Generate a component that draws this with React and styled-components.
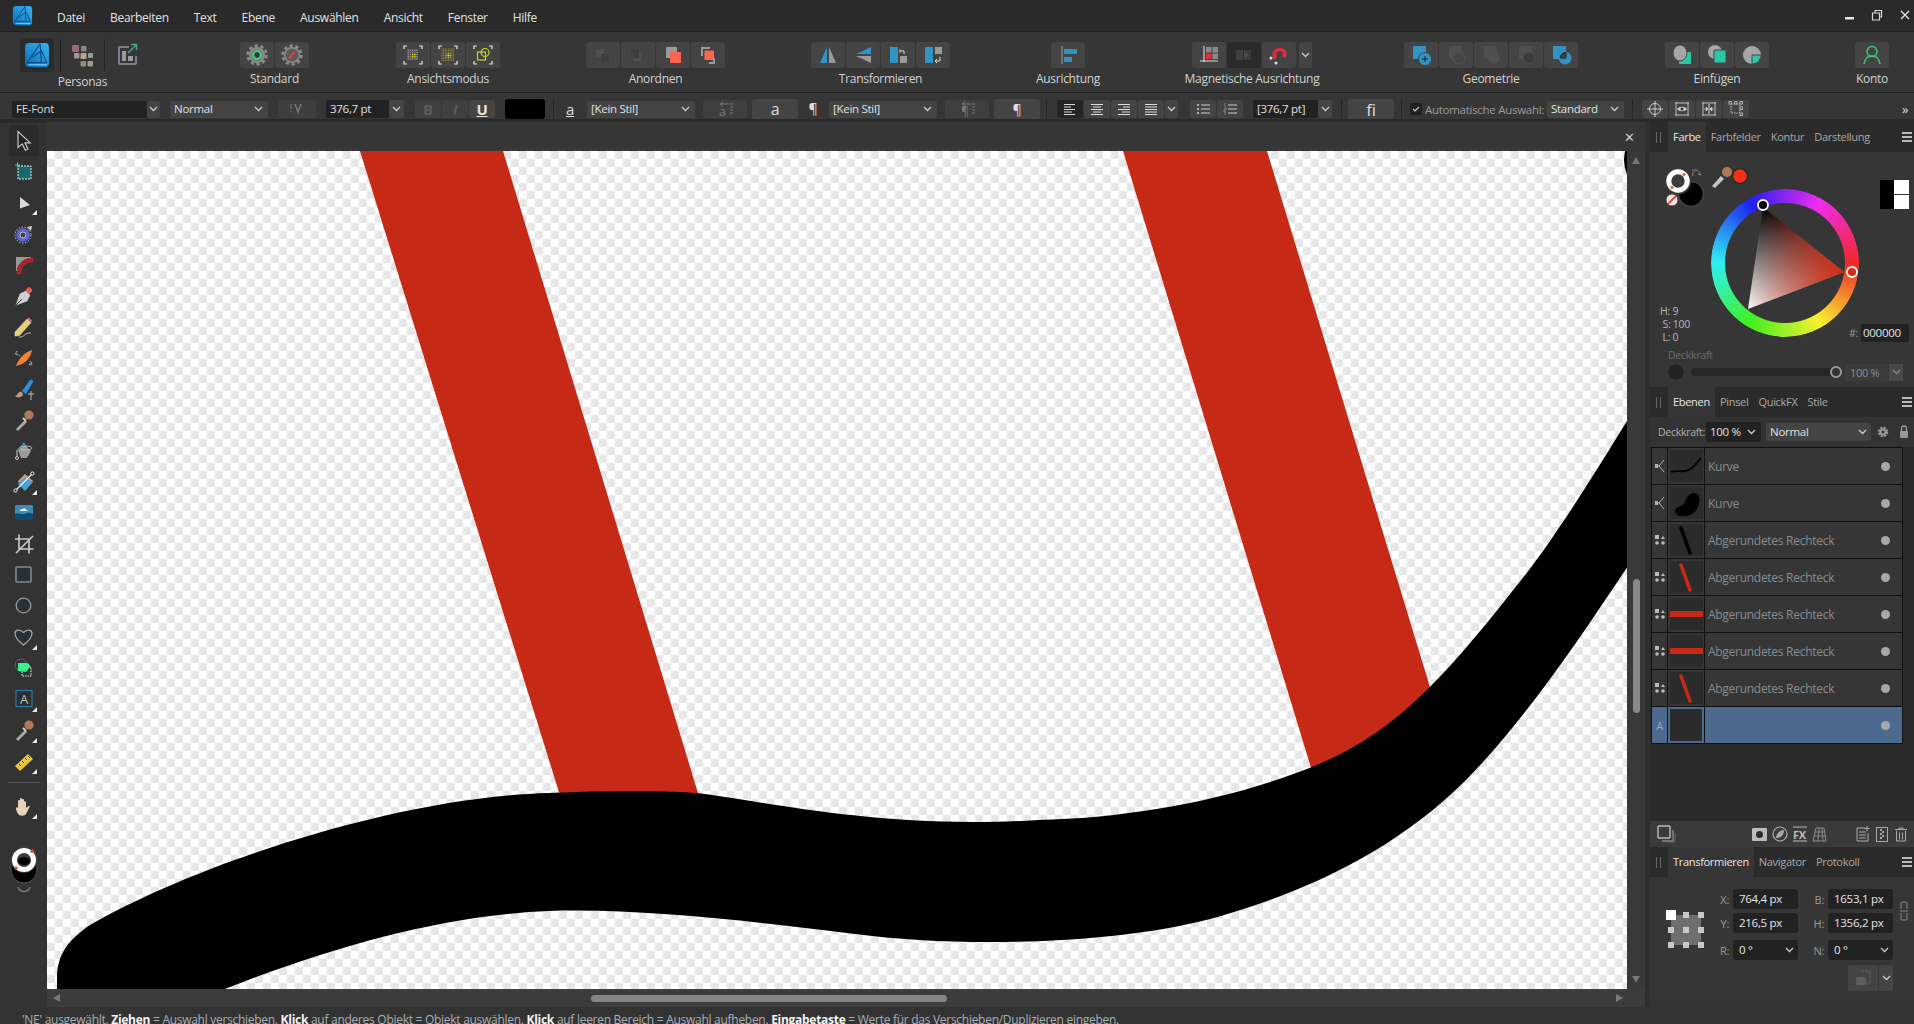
import React from "react";
import styled, { createGlobalStyle } from "styled-components";

const Global = createGlobalStyle`
  html, body { margin: 0; padding: 0; background: #333; overflow: hidden; }
  * { box-sizing: border-box; }
  #root { height: 1024px; }
`;

const App_ = styled.div`
  width: 1914px; height: 1024px; display: flex; flex-direction: column; overflow: hidden;
  background: #363636; color: #d4d4d4; letter-spacing: -0.28px;
  font-family: "Open Sans", "Noto Sans", "Liberation Sans", sans-serif; font-size: 12px;
`;
const MenuBar = styled.div`
  height: 32px; flex: none; display: flex; align-items: center; background: #2a2a2a;
  border-bottom: 1px solid #1f1f1f; padding: 0 0 1px 12px;
`;
const MenuList = styled.div`display: flex; gap: 25px; margin-left: 24px; flex: 1; padding-top: 6px;`;
const MenuItem = styled.span`color: #e2e2e2; font-size: 12px; line-height: 16px;`;
const WinControls = styled.div`display: flex; align-items: center; gap: 16px; margin-right: 3px;`;

const Toolbar = styled.div`
  height: 61px; flex: none; display: flex; background: #363636; border-bottom: 1px solid #222;
  padding: 0 0 0 20px;
`;
const Group = styled.div`
  width: ${p => p.$w}px; margin-left: ${p => p.$ml || 0}px; flex: none; display: flex;
  flex-direction: column; align-items: center; padding-top: 10px;
`;
const BtnRow = styled.div`display: flex; gap: 1px; height: 26px;`;
const TBtn = styled.div`
  width: 34px; height: 26px; border-radius: 3px; display: flex; align-items: center; justify-content: center;
  background: ${p => (p.$off ? "#2b2b2b" : "#444")};
`;
const TChevron = styled.div`
  width: 13px; height: 26px; margin-left: 2px; border-radius: 2px; background: #444;
  display: flex; align-items: center; justify-content: center;
`;
const GroupLabel = styled.div`
  margin-top: 3px; color: #d2d2d2; font-size: 12px; line-height: 16px; white-space: nowrap;
`;
const PersonaWrap = styled.div`
  width: 125px; flex: none; display: flex; flex-direction: column; align-items: center; padding-top: 6px;
`;
const PersonaRow = styled.div`display: flex; height: 34px; width: 100%; align-items: center;`;
const PersonaActive = styled.div`
  width: 34px; height: 34px; border-radius: 3px; background: #2b2b2b; display: flex; align-items: center; justify-content: center;
`;
const PersonaSep = styled.div`width: 1px; height: 32px; background: #222; margin-left: ${p => p.$ml}px;`;
const PersonaIcon = styled.div`margin-left: ${p => p.$ml}px; display: flex;`;
const PersonaLabel = styled(GroupLabel)`margin-top: 2px;`;

const ContextBar = styled.div`
  height: 29px; flex: none; display: flex; align-items: center; background: #363636;
  border-bottom: 3px solid #2a2a2a; padding: 6px 0 0 12px;
`;
const Field = styled.div`
  width: ${p => p.$w}px; margin-left: ${p => p.$ml || 0}px; height: ${p => p.$h || 17}px; flex: none;
  display: flex; align-items: center; justify-content: space-between; padding: 0 ${p => p.$pr ?? 5}px 0 4px;
  background: ${p => p.$bg || "#444"}; border-radius: 2px; color: ${p => p.$c || "#e0e0e0"};
  font-size: 11.5px; white-space: nowrap; line-height: 14px;
`;
const CBtn = styled.div`
  width: ${p => p.$w || 26}px; height: ${p => p.$h || 18}px; margin-left: ${p => p.$ml ?? 1}px; flex: none;
  display: flex; align-items: center; justify-content: center; border-radius: 3px;
  background: ${p => p.$bg || "#444"}; color: ${p => p.$c || "#ddd"};
  font-size: ${p => p.$fs || 14}px; font-weight: ${p => p.$fw || 400}; font-style: ${p => p.$it ? "italic" : "normal"};
`;
const Underlined = styled.span`text-decoration: underline;`;
const Sep = styled.div`width: 1px; height: 20px; background: #262626; margin-left: ${p => p.$ml}px; flex: none;`;
const Swatch = styled.div`width: 40px; height: 20px; margin-left: 10px; border-radius: 3px; background: #000; flex: none;`;
const Glyph = styled.span`
  margin-left: ${p => p.$ml}px; width: ${p => p.$w || 16}px; text-align: center; color: #ddd; font-size: ${p => p.$fs || 15}px; flex: none; line-height: 16px;
  text-decoration: ${p => (p.$u ? "underline" : "none")};
`;
const CheckBox = styled.div`
  width: 12px; height: 12px; margin-left: 8px; background: #222; border-radius: 2px; flex: none;
  display: flex; align-items: center; justify-content: center;
`;
const AutoLabel = styled.span`margin-left: 3px; color: #9a9a9a; font-size: 11.5px; white-space: nowrap; flex: none; width: 119px;`;

const Workspace = styled.div`flex: 1; min-height: 0; display: flex; background: #2f2f2f;`;
const ToolColumn = styled.div`
  width: 47px; flex: none; background: #333; display: flex; flex-direction: column; align-items: center; padding-top: 2px;
  border-top: 1px solid #2a2a2a;
`;
const Tool = styled.div`
  position: relative; width: 30px; height: 31.05px; flex: none; display: flex; align-items: center; justify-content: center;
  border-radius: 3px; background: ${p => (p.$active ? "#2b2b2b" : "transparent")};
  ${p => p.$more && `&::after { content: ""; position: absolute; right: 2px; bottom: 3px; border-style: solid; border-width: 0 0 5px 5px; border-color: transparent transparent #e8e8e8 transparent; }`}
`;
const ToolDivider = styled.div`width: 32px; height: 1px; background: #555; margin: 5px 0 8px; flex: none;`;
const ToolSwatch = styled.div`margin-top: 24px; flex: none; display: flex; flex-direction: column; align-items: center; gap: 2px;`;

const CanvasColumn = styled.div`width: 1598px; flex: none; display: flex; flex-direction: column; background: #363636;`;
const TabStrip = styled.div`
  height: 29px; flex: none; display: flex; align-items: center; justify-content: flex-end; padding-right: 10px;
  color: #ccc; font-size: 13px; background: #363636;
`;
const CanvasRow = styled.div`height: 838px; flex: none; display: flex;`;
const Canvas = styled.div`
  width: 1580px; height: 838px; flex: none; background-color: #fff;
  background-image: conic-gradient(#e6e6e6 25%, transparent 0 50%, #e6e6e6 0 75%, transparent 0);
  background-size: 16px 16px; overflow: hidden;
  & > svg { display: block; }
`;
const VScroll = styled.div`
  width: 18px; flex: none; background: #393939; display: flex; flex-direction: column; align-items: center; padding-top: 6px;
`;
const ArrowUp = styled.div`border-style: solid; border-width: 0 4px 7px 4px; border-color: transparent transparent #777 transparent;`;
const ArrowDown = styled.div`border-style: solid; border-width: 7px 4px 0 4px; border-color: #777 transparent transparent transparent; margin-top: 263px;`;
const VThumb = styled.div`width: 7px; height: 134px; border-radius: 4px; background: #888; margin-top: 415px;`;
const HScroll = styled.div`
  height: 18px; flex: none; background: #3c3c3c; display: flex; align-items: center; padding-left: 6px;
`;
const ArrowLeft = styled.div`border-style: solid; border-width: 4px 7px 4px 0; border-color: transparent #777 transparent transparent;`;
const ArrowRight = styled.div`border-style: solid; border-width: 4px 0 4px 7px; border-color: transparent transparent transparent #777; margin-left: 669px;`;
const HThumb = styled.div`width: 356px; height: 7px; border-radius: 4px; background: #848484; margin-left: 531px;`;

const RightPanel = styled.div`width: 264px; margin-left: 5px; flex: none; display: flex; flex-direction: column; background: #363636;`;
const TabsBar = styled.div`
  height: 30px; flex: none; display: flex; align-items: stretch; background: #2b2b2b; padding-left: 18px; position: relative;
`;
const Grip = styled.div`width: 5px; height: 11px; border-left: 1px solid #666; border-right: 1px solid #666; align-self: center; margin-left: -12px; margin-right: 7px; flex: none;`;
const Tab = styled.div`
  padding: 0 5px 2px; display: flex; align-items: center; font-size: 11px; letter-spacing: -0.3px;
  color: ${p => (p.$active ? "#e6e6e6" : "#a9a9a9")}; background: ${p => (p.$active ? "#363636" : "transparent")};
`;
const Burger = styled.div`
  position: absolute; right: 2px; top: 10px; width: 10px; height: 10px;
  border-top: 2px solid #bbb; border-bottom: 2px solid #bbb;
  &::after { content: ""; display: block; height: 2px; margin-top: 2px; background: #bbb; }
`;

const ColorBody = styled.div`height: 235px; flex: none; display: flex; flex-direction: column;`;
const WheelRow = styled.div`
  height: 197px; flex: none; display: grid; grid-template-columns: 61px 148px minmax(0, 1fr); padding-top: 17px;
`;
const LeftCol = styled.div`display: flex; flex-direction: column; justify-content: space-between; padding-left: 10px; height: 176px; min-width: 0;`;
const SwatchCluster = styled.div`width: 90px; height: 46px; display: flex;`;
const HSL = styled.div`color: #b8b8b8; font-size: 10.5px; line-height: 13px; padding-bottom: 1px; white-space: nowrap;`;
const WheelWrap = styled.div`
  position: relative; width: 148px; height: 148px; margin-top: 20px;
`;
const Wheel = styled.div`
  width: 148px; height: 148px; border-radius: 50%;
  background: conic-gradient(from 30deg, #f02cf0, #f0282a 60deg, #f8f030 120deg, #40f020 180deg, #30f0f0 240deg, #2020f0 300deg, #f02cf0 360deg);
  -webkit-mask: radial-gradient(circle, transparent 59.5px, #000 60.5px);
  mask: radial-gradient(circle, transparent 59.5px, #000 60.5px);
`;
const WheelOverlay = styled.svg`position: absolute; inset: 0;`;
const RightCol = styled.div`display: flex; flex-direction: column; justify-content: space-between; align-items: flex-end; padding-right: 5px; height: 173px; min-width: 0;`;
const BW = styled.div`
  width: 29px; height: 29px; flex: none; background: linear-gradient(#000,#000) left/14px 100% no-repeat, linear-gradient(#fff,#fff) right top/15px 14px no-repeat, linear-gradient(#fff,#fff) right bottom/15px 14px no-repeat, #333;
  margin-top: 11px;
`;
const HexRow = styled.div`display: flex; align-items: center; gap: 3px; color: #999; font-size: 10.5px; flex: none; white-space: nowrap;`;
const HexInput = styled.div`width: 48px; height: 18px; flex: none; background: #222; border-radius: 2px; color: #e6e6e6; font-size: 11.5px; line-height: 18px; padding-left: 2px;`;
const OpacityBlock = styled.div`padding: 0 0 0 18px;`;
const DimLabel = styled.div`color: #6a6a6a; font-size: 10.5px; line-height: 13px; margin-bottom: 1px;`;
const OpacityRow = styled.div`display: flex; align-items: center; height: 18px;`;
const OpDot = styled.div`width: 16px; height: 16px; border-radius: 50%; background: #222; flex: none; border: 1px solid #2a2a2a;`;
const Track = styled.div`
  width: 150px; height: 8px; margin-left: 7px; border-radius: 4px; background: #272727; position: relative; flex: none;
`;
const Knob = styled.div`position: absolute; right: -1px; top: -2px; width: 12px; height: 12px; border-radius: 50%; background: #333; border: 2px solid #999;`;
const OpBox = styled.div`
  width: 43px; height: 17px; margin-left: 4px; background: #3c3c3c; color: #8a8a8a; font-size: 11px; line-height: 17px; padding-left: 5px; flex: none; white-space: nowrap;
`;
const OpChevron = styled.div`width: 14px; height: 17px; margin-left: 1px; background: #484848; display: flex; align-items: center; justify-content: center; flex: none;`;

const LayerOptions = styled.div`height: 30px; flex: none; display: flex; align-items: center; padding-left: 8px; background: #333;`;
const OptLabel = styled.span`color: #b0b0b0; font-size: 10.5px; width: 48px; flex: none; white-space: nowrap;`;
const DarkSelect = styled(Field)`height: 20px;`;
const OptIcon = styled.div`margin-left: ${p => p.$ml}px; display: flex; flex: none;`;
const LayersArea = styled.div`height: 400px; flex: none; display: flex; background: #2b2b2b; flex-direction: column; padding-left: 1px;`;
const LayerList = styled.div`width: 252px; flex: none; border-top: 1px solid #111;`;
const LayerRow = styled.div`
  height: 37px; display: flex; background: ${p => (p.$sel ? "#4c6a8e" : "#363636")};
  border-bottom: 1px solid #111; border-left: 1px solid #111; border-right: 1px solid #111;
`;
const LayerType = styled.div`
  width: 16px; flex: none; display: flex; align-items: center; justify-content: center; border-right: 1px solid #111;
  color: #98a8ba; font-size: 11px;
`;
const LayerThumb = styled.div`
  width: 37px; flex: none; padding: 2px; border-right: 1px solid #111; display: flex;
`;
const ThumbBox = styled.div`flex: 1; background: #2b2b2b; display: flex; align-items: center; justify-content: center;`;
const LayerName = styled.div`flex: 1; padding-left: 3px; display: flex; align-items: center; color: #858b91; font-size: 12px; white-space: nowrap;`;
const LayerDot = styled.div`width: 9px; height: 9px; border-radius: 50%; background: #a8a8a8; margin: auto 12px auto 0; flex: none;`;
const ActionBar = styled.div`
  height: 26px; flex: none; display: flex; align-items: center; background: #3a3a3a; margin: 77px 0 0 -1px; width: 264px;
`;
const ActionIcon = styled.div`margin-left: ${p => p.$ml}px; display: flex; flex: none;`;
const TransformBody = styled.div`
  flex: 1; display: flex; flex-direction: column; padding: 12px 0 0 16px;
`;
const TransformTop = styled.div`display: flex;`;
const Anchor = styled.div`margin-top: 21px; flex: none; width: 42px; display: flex;`;
const TGrid = styled.div`
  display: grid; grid-template-columns: 25px 65px 30px 65px; grid-auto-rows: 20px; row-gap: 4px; align-items: center;
`;
const TLabel = styled.div`color: #9a9a9a; font-size: 11px; text-align: right; padding-right: 4px; margin-top: ${p => p.$mt || 0}px;`;
const TInput = styled.div`
  height: 20px; background: #222; border-radius: 3px; color: #e6e6e6; font-size: 11.5px; line-height: 20px; padding-left: 6px;
  display: flex; justify-content: space-between; align-items: center; padding-right: 4px; white-space: nowrap;
  margin-top: ${p => p.$mt || 0}px;
`;
const LinkIcon = styled.div`margin: 12px 0 0 7px; display: flex;`;
const TBottom = styled.div`display: flex; justify-content: flex-end; gap: 1px; padding-right: 21px; margin-top: 8px;`;
const TBottomBtn = styled.div`width: 30px; height: 26px; background: #444; border-radius: 2px; display: flex; align-items: center; justify-content: center;`;
const TBottomChev = styled.div`width: 14px; height: 26px; background: #444; border-radius: 2px; display: flex; align-items: center; justify-content: center;`;

const StatusBar = styled.div`
  height: 17px; flex: none; background: #333; padding: 5px 0 0 22px; color: #a8b0b8; font-size: 12px; line-height: 16px; white-space: nowrap; overflow: hidden;
  & b { color: #f4f4f4; font-weight: 700; }
`;

/* ---------- icons ---------- */
const S = ({ w = 24, h = 24, vb = "0 0 24 24", children }) => (
  <svg width={w} height={h} viewBox={vb} fill="none" style={{ display: "block", flex: "none", overflow: "visible" }}>{children}</svg>
);
const Chev = ({ c = "#ccc" }) => (
  <S w={9} h={6} vb="0 0 9 6"><path d="M1 1l3.5 3.5L8 1" stroke={c} strokeWidth="1.3" /></S>
);
const Logo = ({ s = 20 }) => (
  <S w={s} h={s} vb="0 0 24 24">
    <defs>
      <linearGradient id={`lg${s}`} x1="0" y1="1" x2="1" y2="0"><stop offset="0" stopColor="#0f6db5" /><stop offset="1" stopColor="#36b6f5" /></linearGradient>
    </defs>
    <rect x="1" y="1" width="22" height="22" rx="3.5" fill={`url(#lg${s})`} />
    <path d="M15 1.5L3 19h18M15 2l1 17M8 14l8-6 5 11" stroke="#0b4f8a" strokeWidth="1.1" />
    <path d="M4 21h17" stroke="#7fd3fb" strokeWidth="1" />
  </S>
);
const Gear = ({ children }) => (
  <S>
    <circle cx="12" cy="12" r="9.2" stroke="#8a8a8a" strokeWidth="3" strokeDasharray="3.2 2.6" />
    <circle cx="12" cy="12" r="8" fill="#8a8a8a" />
    {children}
  </S>
);
const Corners = () => (
  <path d="M3 6V3h3M18 3h3v3M21 18v3h-3M6 21H3v-3" stroke="#e8e8e8" strokeWidth="1.2" />
);
const DotGrid = ({ n, size, c, bg }) => {
  const cells = [];
  const step = size / n;
  for (let i = 0; i < n; i++) for (let j = 0; j < n; j++) {
    cells.push(<rect key={`${i}${j}`} x={12 - size / 2 + i * step} y={12 - size / 2 + j * step} width={step * .65} height={step * .65}
      fill={i >= n * .3 && i < n * .7 && j >= n * .3 && j < n * .7 ? c : bg} />);
  }
  return <>{cells}</>;
};
const Sq = ({ x, y, s, c, r = 1 }) => <rect x={x} y={y} width={s} height={s} rx={r} fill={c} />;

const ToolIcons = {
  cursor: <S><path d="M6 2.5v16l4.3-3.6 3 6.3 2.6-1.2-3-6.2h5.3z" fill="#222" stroke="#c8c8c8" strokeWidth="1.2" /></S>,
  artboard: <S><rect x="6" y="6" width="13" height="13" fill="#17696b" stroke="#eee" strokeWidth="1" strokeDasharray="2 1" /><path d="M3 5h5M5.5 2.5v5" stroke="#2ad7a0" strokeWidth="1.1" /></S>,
  node: <S><path d="M8 6l10 8-10 3.5z" fill="#d8d8d8" /></S>,
  contour: <S><circle cx="11" cy="13" r="8" stroke="#ccc" strokeWidth="1" strokeDasharray="1.5 1.5" /><circle cx="11" cy="13" r="6.8" fill="#5a66d8" /><circle cx="11" cy="13" r="3" fill="#444" stroke="#bbb" /><path d="M15 5l5-1-1 5z" fill="#ccc" /></S>,
  corner: <S><path d="M4 4h15v1C12 5 5 11 5 18H4z" fill="#999" /><path d="M21 5C12 5 5 11 5 21h3.5C9 13 14 9 21 9z" fill="#a3252e" stroke="#d23" strokeWidth=".6" /></S>,
  pen: <S><path d="M4 21l4-11 6-3 4 4-3 6z" fill="#cfcfcf" stroke="#eee" strokeWidth=".5" /><path d="M4 21l6-6" stroke="#333" /><rect x="14.5" y="3.5" width="5.5" height="5.5" rx="1.5" transform="rotate(45 17 6)" fill="#e8604a" /></S>,
  pencil: <S><path d="M3 17L15 4l4 3.5L7.5 20.5 3 21z" fill="#e7cf72" stroke="#eee" strokeWidth=".5" /><path d="M15 4l1.5-1.5 3.5 3L19 7z" fill="#d55fd0" /><path d="M7 22c5 1 6-5 12-4" stroke="#bbb" /></S>,
  vector: <S><path d="M4 20C7 12 13 6 20 4c-1 8-7 14-16 16z" fill="#ef8435" /><path d="M3 7l5 3M5 5l-1 4M17 19l4-3M18 15l2 5" stroke="#aaa" strokeWidth="1.2" strokeDasharray="1.5 1" /></S>,
  paint: <S><path d="M10 14L18 3c2-1 3 0 3 2l-7 12z" fill="#2b8fe0" /><path d="M3 19c2 2 6 2 8-1 0-3-2-4-4-3-1 2-2 3-4 4z" fill="#bd9a86" /><path d="M19 14v9M16 17h6" stroke="#bbb" /></S>,
  dropperBrown: <S><path d="M4 21l9-9 2 2-9 9z" fill="#aaa" /><circle cx="17" cy="7" r="4.6" fill="#b17a57" /><path d="M11 10l3 3" stroke="#ccc" strokeWidth="2" /></S>,
  fill: <S><path d="M6 11l7-5 6 6-4 7H9z" fill="#9c9c9c" /><path d="M5 11l7-6" stroke="#3a8bc2" strokeWidth="1.2" /><circle cx="5" cy="19" r="1.5" stroke="#ccc" /><path d="M5 17v-6" stroke="#ccc" /><circle cx="12" cy="5" r="1.5" fill="#3a8bc2" /><ellipse cx="14" cy="9" rx="6" ry="2" stroke="#bbb" /></S>,
  gradient: <S><path d="M6 11l7-7 8 7-8 9z" fill="#c9a27a" /><path d="M9 17l-3-3 7-7 8 5-8 9z" fill="#4f9fd0" /><path d="M3 21L21 3" stroke="#eee" strokeWidth="1.2" /><circle cx="3.5" cy="20.5" r="1.6" fill="#333" stroke="#eee" /><circle cx="20.5" cy="3.5" r="1.6" fill="#333" stroke="#eee" /></S>,
  image: <S><rect x="3" y="4" width="18" height="15" rx="1" fill="#3f8cba" /><path d="M3 13c3-2 6 1 9 0s6-2 9 0v6H3z" fill="#0e4b70" /><path d="M8 10c0-2 2-2 3-2 1-1 3-1 3 1 1 0 2 0 2 1z" fill="#e8f2f8" /></S>,
  crop: <S><path d="M7 2.5V17h14.5M3 7h14v14.5M4 21L21 4" stroke="#ccc" strokeWidth="1.6" /></S>,
  rect: <S><rect x="4" y="4" width="15" height="15" rx="1" fill="#2a3033" stroke="#888" strokeWidth="1.6" /></S>,
  ellipse: <S><circle cx="11.5" cy="11.5" r="7.3" fill="#2a3033" stroke="#999" strokeWidth="1.3" /></S>,
  heart: <S><path d="M11.5 20C5 15 3 12 3 8.5 3 5 7.5 3.5 11.5 7.5 15.5 3.5 20 5 20 8.5 20 12 18 15 11.5 20z" fill="#2a3033" stroke="#aaa" strokeWidth="1.2" /></S>,
  shape: <S><circle cx="9" cy="9" r="6" stroke="#3aa4c2" strokeDasharray="1.5 1" /><rect x="10" y="11" width="9" height="9" stroke="#cfe" strokeDasharray="1.5 1" /><path d="M6 7h8c3 0 4 2 4 4l-4 5-8-1z" fill="#3cf08e" /></S>,
  text: <S><rect x="4" y="3.5" width="16" height="16" stroke="#2c7fa6" strokeWidth="1.1" fill="#2a3033" /><text x="12" y="16.5" textAnchor="middle" fontSize="13" fill="#bbb" fontFamily="Open Sans, sans-serif">A</text></S>,
  ruler: <S><path d="M3 17L16 5l5 5-13 12z" fill="#e7c63e" /><path d="M7 15l2 2M10 12l2 2M13 9l2 2M16 7l2 2" stroke="#444" strokeWidth="1" /></S>,
  hand: <S><path d="M7 20c-2-2-3-5-3-7 0-1 1-1 2 0V6c0-1.5 2-1.5 2 0V4c0-1.5 2-1.5 2 0v1c0-1.5 2-1.5 2 0v2c0-1 2-1 2 0v6c1-1 2-2 3-2 1 0 1 1 0 2l-3 6c-1 2-5 2-7 1z" fill="#e9d4bb" /></S>,
};

const Thumb = ({ kind }) => {
  const map = {
    curve: <path d="M1 22c5-2 9 0 14-1 7-1 10-6 16-13" stroke="#000" strokeWidth="1.8" />,
    blob: <path d="M5 24c0-4 7-4 10-9 1-5 5-9 9-9 5 0 6 5 5 10-1 7-6 12-13 13-6 1-11-1-11-5z" fill="#000" />,
    blackBar: <path d="M11 4l9 25" stroke="#000" strokeWidth="3.6" strokeLinecap="round" />,
    redBar: <path d="M11 4l9 25" stroke="#c62916" strokeWidth="3.6" strokeLinecap="round" />,
    hBar: <rect x="0" y="13" width="33" height="6" fill="#c62916" />,
    none: null,
  };
  return <S w={33} h={33} vb="0 0 33 33">{map[kind]}</S>;
};

const NodeType = () => (
  <S w={14} h={16} vb="0 0 14 16"><path d="M11 2L6 8l5 6M6 8H3" stroke="#b0b0b0" strokeWidth="1" /><rect x="2" y="6" width="3" height="4" fill="#b0b0b0" /></S>
);
const ShapeType = () => (
  <S w={12} h={12} vb="0 0 12 12"><rect x="1" y="1" width="4" height="4" fill="#bbb" /><path d="M9 2l2 3H7z" fill="#bbb" /><circle cx="3" cy="9" r="1.8" fill="#bbb" /><circle cx="9" cy="9" r="1.8" fill="#bbb" /></S>
);

/* ---------- canvas path (page coordinates) ---------- */
const curvePath =
  "M57 995V978C57 955 68 940 90 925C200 862 400 797 549 793C600 791 650 790 696 793C760 800 880 830 1038 820C1130 818 1230 800 1312 767" +
  "C1400 732 1450 670 1526 574C1560 530 1600 465 1640 400L1640 548C1585 630 1530 715 1465 781C1395 850 1310 890 1221 916" +
  "C1120 945 960 948 855 934C760 922 640 908 549 911C440 915 320 950 210 995Z";

const CanvasArt = () => (
  <svg width="1580" height="838" viewBox="47 151 1580 838">
    <path d="M360 151H503L698 793V860H580z" fill="#c62916" />
    <path d="M1123 151H1267L1440 720L1330 830z" fill="#c62916" />
    <path d={curvePath} fill="#000" />
    <circle cx="1660" cy="160" r="36" fill="#000" />
  </svg>
);

/* ---------- data ---------- */
const menu = ["Datei", "Bearbeiten", "Text", "Ebene", "Auswählen", "Ansicht", "Fenster", "Hilfe"];
const toolsA = [
  ["cursor", 0, 1], ["artboard"], ["node", 1], ["contour"], ["corner"], ["pen"], ["pencil"], ["vector"], ["paint"], ["dropperBrown"],
  ["fill"], ["gradient", 1], ["image"], ["crop"], ["rect"], ["ellipse"], ["heart", 1], ["shape"], ["text", 1], ["dropperBrown", 1], ["ruler", 1],
];
const layers = [
  ["node", "curve", "Kurve"], ["node", "blob", "Kurve"],
  ["shape", "blackBar", "Abgerundetes Rechteck"], ["shape", "redBar", "Abgerundetes Rechteck"],
  ["shape", "hBar", "Abgerundetes Rechteck"], ["shape", "hBar", "Abgerundetes Rechteck"],
  ["shape", "redBar", "Abgerundetes Rechteck"],
];

const Dim = "#4f4f4f";
const Blue = "#2f93c4";
const Coral = "#fb6650";

export default function App() {
  return (
    <App_>
      <Global />
      <MenuBar>
        <Logo s={21} />
        <MenuList>{menu.map(m => <MenuItem key={m}>{m}</MenuItem>)}</MenuList>
        <WinControls>
          <S w={12} h={12} vb="0 0 12 12"><rect x="2" y="8" width="9" height="2.5" fill="#e6e6e6" /></S>
          <S w={12} h={12} vb="0 0 12 12"><path d="M1.5 4h7v7h-7zM4 4V1.5h6.5V8H8.5" stroke="#d8d8d8" strokeWidth="1.2" /></S>
          <S w={12} h={12} vb="0 0 12 12"><path d="M2 2l8 8M10 2l-8 8" stroke="#e6e6e6" strokeWidth="1.3" /></S>
        </WinControls>
      </MenuBar>

      <Toolbar>
        <PersonaWrap>
          <PersonaRow>
            <PersonaActive><Logo s={26} /></PersonaActive>
            <PersonaSep $ml={6} />
            <PersonaIcon $ml={10}>
              <S w={22} h={26} vb="0 0 22 26">
                <Sq x="1" y="3" s="7" c="#9c6a70" /><Sq x="10" y="4" s="5.5" c="#888" />
                <Sq x="3" y="11" s="5.5" c="#999" /><Sq x="9.5" y="11" s="6" c="#b6a78c" /><Sq x="17" y="11" s="5" c="#999" />
                <Sq x="9.5" y="19" s="5.5" c="#8d8d8d" /><Sq x="16.5" y="19" s="5.5" c="#a59a80" />
              </S>
            </PersonaIcon>
            <PersonaSep $ml={11} />
            <PersonaIcon $ml={12}>
              <S w={22} h={26} vb="0 0 22 26">
                <path d="M12 5H3a1 1 0 00-1 1v15a1 1 0 001 1h15a1 1 0 001-1v-7" stroke="#7e7e8e" strokeWidth="2" />
                <rect x="5" y="9" width="4" height="10" fill="#9a9a9a" /><rect x="11" y="14" width="5" height="5" fill="#9a9a9a" />
                <path d="M11 11l8-8M14 2.5h5.5V8" stroke="#4aa08c" strokeWidth="1.6" />
              </S>
            </PersonaIcon>
          </PersonaRow>
          <PersonaLabel>Personas</PersonaLabel>
        </PersonaWrap>

        <Group $w={69} $ml={95}>
          <BtnRow>
            <TBtn><Gear><circle cx="12" cy="12" r="5.5" fill="#555" /><circle cx="12" cy="12" r="4" stroke="#3fd47e" strokeWidth="2.2" /><circle cx="12" cy="12" r="2.4" fill="#333" /></Gear></TBtn>
            <TBtn><Gear><circle cx="12" cy="12" r="6.5" fill="#5a5a5a" /><path d="M9 15.5l6-7" stroke="#e23a42" strokeWidth="2.5" /></Gear></TBtn>
          </BtnRow>
          <GroupLabel>Standard</GroupLabel>
        </Group>

        <Group $w={104} $ml={87}>
          <BtnRow>
            <TBtn><S><Corners /><DotGrid n={5} size={11} c="#f2f22a" bg="#9a9a9a" /></S></TBtn>
            <TBtn><S><Corners /><DotGrid n={8} size={13} c="#e7e73a" bg="#8a8a3a" /></S></TBtn>
            <TBtn><S><Corners /><rect x="6.5" y="9" width="8" height="8" stroke="#c8d02a" strokeWidth="1.2" /><circle cx="14" cy="9.5" r="4" stroke="#c8d02a" strokeWidth="1.2" /></S></TBtn>
          </BtnRow>
          <GroupLabel>Ansichtsmodus</GroupLabel>
        </Group>

        <Group $w={139} $ml={86}>
          <BtnRow>
            <TBtn><S><Sq x="5" y="6" s="8" c={Dim} /><Sq x="10" y="11" s="8" c="#3d3d3d" /></S></TBtn>
            <TBtn><S><Sq x="5" y="6" s="8" c="#3d3d3d" /><path d="M14 10v7H8" stroke={Dim} strokeWidth="2" /></S></TBtn>
            <TBtn><S><Sq x="5" y="4" s="11" c="#9a9a9a" /><Sq x="9" y="9" s="11" c={Coral} /></S></TBtn>
            <TBtn><S><path d="M14 5H6v8" stroke="#9a9a9a" strokeWidth="2" /><path d="M18 15v5h-5" stroke="#9a9a9a" strokeWidth="2" /><Sq x="8.5" y="7.5" s="9.5" c={Coral} /></S></TBtn>
          </BtnRow>
          <GroupLabel>Anordnen</GroupLabel>
        </Group>

        <Group $w={139} $ml={86}>
          <BtnRow>
            <TBtn><S><path d="M11 4v16H4z" fill={Blue} /><path d="M13 4v16h7z" fill="#9a9a9a" /></S></TBtn>
            <TBtn><S><path d="M20 4L5 11h15z" fill={Blue} /><path d="M20 20L5 13h15z" fill="#9a9a9a" /></S></TBtn>
            <TBtn><S><rect x="4" y="4" width="8" height="16" fill={Blue} /><rect x="14" y="13" width="7" height="7" fill="#9a9a9a" /><path d="M14 8h4v3M14 6.5v3" stroke="#ddd" /></S></TBtn>
            <TBtn><S><rect x="4" y="4" width="8" height="16" fill={Blue} /><rect x="14" y="4" width="7" height="7" fill="#9a9a9a" /><path d="M19 14v4h-5M16 16l-2 2 2 2" stroke="#ddd" /></S></TBtn>
          </BtnRow>
          <GroupLabel>Transformieren</GroupLabel>
        </Group>

        <Group $w={34} $ml={101}>
          <BtnRow>
            <TBtn><S><path d="M6 3v18" stroke="#999" strokeWidth="1.1" /><rect x="8" y="6" width="13" height="5" fill={Blue} /><rect x="8" y="14" width="8" height="5" fill={Blue} /></S></TBtn>
          </BtnRow>
          <GroupLabel>Ausrichtung</GroupLabel>
        </Group>

        <Group $w={118} $ml={108}>
          <BtnRow>
            <TBtn><S><path d="M7 3v16M3 18h18" stroke="#ddd" strokeWidth="1.1" /><Sq x="9" y="4" s="5.5" c="#888" r="0" /><Sq x="15.5" y="4" s="5.5" c="#888" r="0" /><Sq x="9" y="10.5" s="5.5" c="#e0303a" r="0" /><Sq x="15.5" y="10.5" s="5.5" c="#888" r="0" /></S></TBtn>
            <TBtn $off><S><rect x="4" y="7" width="7" height="10" fill="#3f3f3f" /><rect x="12" y="7" width="7" height="10" fill="#3a3a3a" /><path d="M12 8l5 4-5 4z" fill="#4a4a4a" /></S></TBtn>
            <TBtn><S><path d="M7 17c-3-4-2-12 6-12 7 0 8 7 5 10l-3-2c2-3 0-5-2-5-3 0-5 3-3 6z" fill="#e22a3a" /><circle cx="9" cy="20" r="1.5" fill="#ddd" /><circle cx="4" cy="15" r="1.5" fill="#ddd" /></S></TBtn>
            <TChevron><Chev /></TChevron>
          </BtnRow>
          <GroupLabel>Magnetische Ausrichtung</GroupLabel>
        </Group>

        <Group $w={174} $ml={93}>
          <BtnRow>
            <TBtn><S><rect x="4" y="3" width="13" height="13" rx="1" fill={Blue} /><circle cx="16" cy="16" r="6.5" fill={Blue} stroke="#444" /><path d="M13 16h6M16 13v6" stroke="#222" /></S></TBtn>
            <TBtn><S><Sq x="5" y="3" s="13" c={Dim} /><circle cx="15" cy="15" r="6" fill="#444" stroke={Dim} strokeWidth="1.5" /></S></TBtn>
            <TBtn><S><Sq x="5" y="3" s="13" c={Dim} /><circle cx="15" cy="15" r="6" fill={Dim} /></S></TBtn>
            <TBtn><S><Sq x="5" y="3" s="13" c={Dim} /><circle cx="15" cy="15" r="6" fill="#3c3c3c" stroke={Dim} /></S></TBtn>
            <TBtn><S><rect x="4" y="3" width="13" height="13" rx="1" fill={Blue} /><circle cx="16" cy="15" r="6.5" fill={Blue} /><path d="M17 9.5a6 6 0 00-6 5.5h6z" fill="#444" stroke="#222" /></S></TBtn>
          </BtnRow>
          <GroupLabel>Geometrie</GroupLabel>
        </Group>

        <Group $w={104} $ml={87}>
          <BtnRow>
            <TBtn><S><rect x="9" y="9" width="12" height="12" rx="1" fill="#2ac9a4" /><ellipse cx="10" cy="10" rx="7" ry="8" fill="#a6a6a6" stroke="#444" /></S></TBtn>
            <TBtn><S><circle cx="10" cy="9" r="7" fill="#a6a6a6" /><rect x="9" y="7" width="12" height="13" rx="1" fill="#2ac9a4" stroke="#444" /></S></TBtn>
            <TBtn><S><circle cx="12" cy="12" r="9" fill="#a6a6a6" /><path d="M12 12h9c0 5-4 9-9 9z" fill="#2ac9a4" stroke="#444" /></S></TBtn>
          </BtnRow>
          <GroupLabel>Einfügen</GroupLabel>
        </Group>

        <Group $w={34} $ml={86}>
          <BtnRow>
            <TBtn><S><circle cx="12" cy="8.5" r="5" stroke="#3fc07a" strokeWidth="1.5" /><path d="M4 21c1-6 4-8 8-8s7 2 8 8" stroke="#3fc07a" strokeWidth="1.5" /></S></TBtn>
          </BtnRow>
          <GroupLabel>Konto</GroupLabel>
        </Group>
      </Toolbar>

      <ContextBar>
        <Field $w={135} $bg="#222" $c="#d8d8d8">FE-Font</Field>
        <CBtn $w={13} $h={17} $ml={0}><Chev /></CBtn>
        <Field $w={98} $ml={10}>Normal<Chev /></Field>
        <CBtn $w={38} $ml={10} $bg="#3e3e3e"><S w={16} h={14} vb="0 0 16 14"><path d="M2 2v5M2 9v1" stroke="#777" /><path d="M6 2l3 8 3-8" stroke="#777" strokeWidth="1.5" /><path d="M3 12h11" stroke="#555" strokeDasharray="1 1" /></S></CBtn>
        <Field $w={63} $ml={10} $bg="#222" $h={18}>376,7 pt</Field>
        <CBtn $w={15} $ml={0}><Chev /></CBtn>
        <CBtn $ml={11} $bg="#404040" $c="#5a5a5a" $fw={700} $fs={15}>B</CBtn>
        <CBtn $bg="#404040" $c="#5a5a5a" $fw={700} $it $fs={15}>I</CBtn>
        <CBtn $c="#e4e4e4" $fw={700} $fs={15}><Underlined>U</Underlined></CBtn>
        <Swatch />
        <Sep $ml={8} />
        <Glyph $ml={8} $u>a</Glyph>
        <Field $w={108} $ml={9}>[Kein Stil]<Chev /></Field>
        <CBtn $w={44} $ml={8} $h={18} $bg="#3f3f3f"><S w={18} h={16} vb="0 0 18 16"><path d="M4 3h9M4 3l3-2M4 3l3 2M14 3h3M14 6h3M14 9h3M14 12h3" stroke="#777" /><text x="3" y="15" fontSize="12" fill="#777" fontFamily="Open Sans, sans-serif">a</text></S></CBtn>
        <CBtn $w={46} $ml={5} $h={20} $fs={16}>a</CBtn>
        <Glyph $ml={9} $w={12} $fs={14}>¶</Glyph>
        <Field $w={108} $ml={10}>[Kein Stil]<Chev /></Field>
        <CBtn $w={44} $ml={8} $h={18} $bg="#3f3f3f"><S w={18} h={16} vb="0 0 18 16"><path d="M4 3h9M4 3l3-2M4 3l3 2M14 3h3M14 6h3M14 9h3M14 12h3" stroke="#777" /><text x="3" y="15" fontSize="12" fill="#777" fontFamily="Open Sans, sans-serif">¶</text></S></CBtn>
        <CBtn $w={46} $ml={5} $h={20} $fs={14}>¶</CBtn>
        <Sep $ml={6} />
        <CBtn $ml={10} $bg="#252525"><S w={12} h={12} vb="0 0 12 12"><path d="M0 1.5h11M0 4h7M0 6.5h11M0 9h8M0 11.5h11" stroke="#ddd" /></S></CBtn>
        <CBtn><S w={12} h={12} vb="0 0 12 12"><path d="M0 1.5h12M2 4h8M0 6.5h12M2 9h8M0 11.5h12" stroke="#ddd" /></S></CBtn>
        <CBtn><S w={12} h={12} vb="0 0 12 12"><path d="M0 1.5h12M5 4h7M0 6.5h12M4 9h8M0 11.5h12" stroke="#ddd" /></S></CBtn>
        <CBtn><S w={12} h={12} vb="0 0 12 12"><path d="M0 1.5h12M0 4h12M0 6.5h12M0 9h12M0 11.5h12" stroke="#ddd" /></S></CBtn>
        <CBtn $w={13}><Chev /></CBtn>
        <CBtn $ml={12}><S w={13} h={12} vb="0 0 13 12"><path d="M4 2h9M4 6h9M4 10h9" stroke="#ccc" /><circle cx="1" cy="2" r="1" fill="#ccc" /><circle cx="1" cy="6" r="1" fill="#ccc" /><circle cx="1" cy="10" r="1" fill="#ccc" /></S></CBtn>
        <CBtn><S w={13} h={12} vb="0 0 13 12"><path d="M4 2h9M4 6h9M4 10h9" stroke="#ccc" /><path d="M1 0v4M0 5h2v2H0v2h2M0 11h2" stroke="#999" strokeWidth=".7" /></S></CBtn>
        <Field $w={65} $ml={10} $bg="#222" $h={18}>[376,7 pt]</Field>
        <CBtn $w={14} $ml={0}><Chev /></CBtn>
        <Sep $ml={9} />
        <CBtn $w={46} $ml={6} $h={20} $fs={17}>fi</CBtn>
        <Sep $ml={7} />
        <CheckBox><S w={10} h={10} vb="0 0 10 10"><path d="M2 5l2 2 4-4" stroke="#ccc" strokeWidth="1.1" /></S></CheckBox>
        <AutoLabel>Automatische Auswahl:</AutoLabel>
        <Field $w={77} $ml={3}>Standard<Chev /></Field>
        <Sep $ml={8} />
        <CBtn $ml={9}><S w={16} h={16} vb="0 0 16 16"><circle cx="8" cy="8" r="5.5" stroke="#ccc" /><path d="M8 0v16M0 8h16" stroke="#ccc" /></S></CBtn>
        <CBtn><S w={16} h={16} vb="0 0 16 16"><path d="M2 1v14M14 1v14M1 2h14M1 14h14" stroke="#bbb" /><path d="M3 8c2-3 8-3 10 0-2 3-8 3-10 0z" fill="#ccc" /><circle cx="8" cy="8" r="1.5" fill="#333" /></S></CBtn>
        <CBtn><S w={16} h={16} vb="0 0 16 16"><path d="M2 1v14M14 1v14M1 2h14M1 14h14" stroke="#bbb" /><path d="M8 3v10" stroke="#ddd" /><path d="M3 8h2M11 8h2M5 6v4l2-2zM11 6v4L9 8z" fill="#ddd" stroke="#ddd" strokeWidth=".5" /></S></CBtn>
        <CBtn><S w={16} h={16} vb="0 0 16 16"><path d="M3 3h9v9H3z" stroke="#bbb" strokeDasharray="1.5 1" /><g stroke="#aaa"><rect x="1" y="0.5" width="2.5" height="2.5" /><rect x="6.5" y="0.5" width="2.5" height="2.5" /><rect x="12" y="0.5" width="2.5" height="2.5" /><rect x="12" y="6" width="2.5" height="2.5" /><rect x="12" y="12" width="2.5" height="2.5" /></g></S></CBtn>
        <Glyph $ml={150} $w={12} $fs={13}>»</Glyph>
      </ContextBar>

      <Workspace>
        <ToolColumn>
          {toolsA.map(([k, more, active], i) => (
            <Tool key={i} $more={more} $active={active}>{ToolIcons[k]}</Tool>
          ))}
          <ToolDivider />
          <Tool $more>{ToolIcons.hand}</Tool>
          <ToolSwatch>
            <S w={30} h={38} vb="0 0 30 38">
              <rect x="2" y="2" width="26" height="35" rx="13" fill="#000" stroke="#444" strokeWidth="1.5" />
              <circle cx="15" cy="14" r="13" fill="#3d3d3d" />
              <circle cx="15" cy="14" r="9.5" stroke="#fff" strokeWidth="5" />
              <ellipse cx="15" cy="15" rx="6" ry="4" fill="#000" />
              <path d="M22 6.5l2.5-2.5M8 21l-2 2" stroke="#f0492e" strokeWidth="3" />
            </S>
            <S w={14} h={7} vb="0 0 14 7"><path d="M1 1c2 6 10 6 12 0" stroke="#888" strokeWidth="1.1" /></S>
          </ToolSwatch>
        </ToolColumn>

        <CanvasColumn>
          <TabStrip>✕</TabStrip>
          <CanvasRow>
            <Canvas><CanvasArt /></Canvas>
            <VScroll>
              <ArrowUp />
              <VThumb />
              <ArrowDown />
            </VScroll>
          </CanvasRow>
          <HScroll>
            <ArrowLeft />
            <HThumb />
            <ArrowRight />
          </HScroll>
        </CanvasColumn>

        <RightPanel>
          <TabsBar>
            <Grip />
            <Tab $active>Farbe</Tab><Tab>Farbfelder</Tab><Tab>Kontur</Tab><Tab>Darstellung</Tab>
            <Burger />
          </TabsBar>
          <ColorBody>
            <WheelRow>
              <LeftCol>
                <SwatchCluster>
                  <S w={90} h={46} vb="0 0 90 46">
                    <circle cx="31" cy="25" r="12.5" fill="#000" stroke="#444" strokeWidth="1.5" />
                    <circle cx="18" cy="12" r="13.5" fill="#3c3c3c" />
                    <circle cx="18" cy="12" r="9.2" stroke="#fff" strokeWidth="5" />
                    <path d="M25 4.5l-2 2M11 19.5l2-2" stroke="#f0604c" strokeWidth="3" />
                    <circle cx="12" cy="31" r="6" fill="#e8e8e8" stroke="#444" />
                    <path d="M8 35l8-8" stroke="#e34a3a" strokeWidth="2" />
                    <path d="M32 1c4-1 7 1 9 5M33 7c-1-3 0-4 2-5M41 6l-3-1" stroke="#888" strokeWidth="1" />
                    <path d="M52 17l9-10 3 3-9 9z" fill="#c4c4c4" />
                    <circle cx="67" cy="3" r="5" fill="#b17a57" />
                    <circle cx="80" cy="7" r="7.5" fill="#f2311b" stroke="#2a2a2a" strokeWidth="1.5" />
                  </S>
                </SwatchCluster>
                <HSL>H: 9<br />&nbsp;S: 100<br />&nbsp;L: 0</HSL>
              </LeftCol>
              <WheelWrap>
                <Wheel />
                <WheelOverlay viewBox="0 0 148 148">
                  <defs>
                    <linearGradient id="triBW" gradientUnits="userSpaceOnUse" x1="52" y1="19" x2="37" y2="121">
                      <stop offset="0" stopColor="#000" /><stop offset="1" stopColor="#fff" />
                    </linearGradient>
                    <linearGradient id="triRed" gradientUnits="userSpaceOnUse" x1="133" y1="84" x2="44" y2="70">
                      <stop offset="0" stopColor="#d82a12" /><stop offset="1" stopColor="#d82a12" stopOpacity="0" />
                    </linearGradient>
                  </defs>
                  <path d="M133 83L52 18 37 120z" fill="url(#triBW)" />
                  <path d="M133 83L52 18 37 120z" fill="url(#triRed)" />
                  <circle cx="52" cy="16" r="5" fill="#000" stroke="#fff" strokeWidth="1.8" />
                  <circle cx="141" cy="83" r="5" fill="#d82a12" stroke="#fff" strokeWidth="1.8" />
                </WheelOverlay>
              </WheelWrap>
              <RightCol>
                <BW />
                <HexRow>#:<HexInput>000000</HexInput></HexRow>
              </RightCol>
            </WheelRow>
            <OpacityBlock>
              <DimLabel>Deckkraft</DimLabel>
              <OpacityRow>
                <OpDot />
                <Track><Knob /></Track>
                <OpBox>100 %</OpBox>
                <OpChevron><Chev c="#888" /></OpChevron>
              </OpacityRow>
            </OpacityBlock>
          </ColorBody>

          <TabsBar>
            <Grip />
            <Tab $active>Ebenen</Tab><Tab>Pinsel</Tab><Tab>QuickFX</Tab><Tab>Stile</Tab>
            <Burger />
          </TabsBar>
          <LayerOptions>
            <OptLabel>Deckkraft:</OptLabel>
            <DarkSelect $w={55} $bg="#222">100 %<Chev /></DarkSelect>
            <Field $w={105} $ml={5} $h={18} $pr={4}>Normal<Chev /></Field>
            <OptIcon $ml={6}>
              <S w={12} h={12}><circle cx="12" cy="12" r="8" stroke="#999" strokeWidth="5" strokeDasharray="4 2.3" /><circle cx="12" cy="12" r="7" fill="#999" /><circle cx="12" cy="12" r="3" fill="#333" /></S>
            </OptIcon>
            <OptIcon $ml={10}>
              <S w={10} h={14} vb="0 0 10 14"><path d="M2.5 6V3.5a2.5 2.5 0 015 0V6" stroke="#999" strokeWidth="1.3" /><rect x="1" y="6" width="8" height="7" rx="1" fill="#999" /></S>
            </OptIcon>
          </LayerOptions>
          <LayersArea>
            <LayerList>
              {layers.map(([type, thumb, name], i) => (
                <LayerRow key={i}>
                  <LayerType>{type === "node" ? <NodeType /> : <ShapeType />}</LayerType>
                  <LayerThumb><ThumbBox><Thumb kind={thumb} /></ThumbBox></LayerThumb>
                  <LayerName>{name}</LayerName>
                  <LayerDot />
                </LayerRow>
              ))}
              <LayerRow $sel>
                <LayerType>A</LayerType>
                <LayerThumb><ThumbBox /></LayerThumb>
                <LayerName />
                <LayerDot />
              </LayerRow>
            </LayerList>
            <ActionBar>
              <ActionIcon $ml={6}>
                <S w={20} h={20} vb="0 0 20 20"><rect x="2" y="2" width="12" height="12" rx="1" stroke="#bbb" strokeWidth="1.5" /><path d="M17 6v10a1 1 0 01-1 1H6" stroke="#888" strokeWidth="1.3" /><path d="M19 9v9h-9" stroke="#666" /></S>
              </ActionIcon>
              <ActionIcon $ml={76}>
                <S w={15} h={13} vb="0 0 15 13"><rect width="15" height="13" rx="1" fill="#bbb" /><circle cx="7.5" cy="6.5" r="3.5" fill="#2b2b2b" /></S>
              </ActionIcon>
              <ActionIcon $ml={5}>
                <S w={16} h={16} vb="0 0 16 16"><circle cx="8" cy="8" r="7" stroke="#aaa" strokeWidth="1.2" /><path d="M12 4c0 5-3 8-8 8 0-4 4-8 8-8z" fill="#aaa" /></S>
              </ActionIcon>
              <ActionIcon $ml={5}>
                <S w={14} h={16} vb="0 0 14 16"><path d="M0 1h14M0 15h14" stroke="#bbb" /><text x="0" y="12.5" fontSize="11" fontWeight="700" fill="#bbb" fontFamily="Open Sans, sans-serif">FX</text></S>
              </ActionIcon>
              <ActionIcon $ml={5}>
                <S w={15} h={15} vb="0 0 15 15"><path d="M4 1h8l2 13H1zM7 1L6 14M10 1l1 13M3 5h10M2 9h12" stroke="#8a8a8a" /></S>
              </ActionIcon>
              <ActionIcon $ml={29}>
                <S w={14} h={16} vb="0 0 14 16"><path d="M9 2H1v13h11V7" stroke="#aaa" /><path d="M3 6h7M3 9h7M3 12h7" stroke="#aaa" /><path d="M11 0v5M8.5 2.5h5" stroke="#aaa" /></S>
              </ActionIcon>
              <ActionIcon $ml={6}>
                <S w={12} h={15} vb="0 0 12 15"><rect x=".5" y=".5" width="11" height="14" stroke="#aaa" /><path d="M4 2h2v2H4zM6 4h2v2H6zM4 6h2v2H4zM6 8h2v2H6zM4 10h2v2H4z" fill="#aaa" /></S>
              </ActionIcon>
              <ActionIcon $ml={7}>
                <S w={12} h={15} vb="0 0 12 15"><path d="M0 2.5h12M4 2.5V1h4v1.5M1.5 4v10h9V4M4.5 5.5v7M7.5 5.5v7" stroke="#aaa" /></S>
              </ActionIcon>
            </ActionBar>
          </LayersArea>

          <TabsBar>
            <Grip />
            <Tab $active>Transformieren</Tab><Tab>Navigator</Tab><Tab>Protokoll</Tab>
            <Burger />
          </TabsBar>
          <TransformBody>
            <TransformTop>
              <Anchor>
                <S w={40} h={40} vb="0 0 40 40">
                  <rect x="5" y="5" width="30" height="30" fill="#6e6e6e" />
                  {[5, 20, 35].flatMap(x => [5, 20, 35].map(y => <rect key={`${x}${y}`} x={x - 3} y={y - 3} width="6" height="6" fill="#c8c8c8" />))}
                  <rect x="0" y="0" width="10" height="10" fill="#fff" />
                </S>
              </Anchor>
              <TGrid>
                <TLabel>X:</TLabel><TInput>764,4 px</TInput><TLabel>B:</TLabel><TInput>1653,1 px</TInput>
                <TLabel>Y:</TLabel><TInput>216,5 px</TInput><TLabel>H:</TLabel><TInput>1356,2 px</TInput>
                <TLabel $mt={6}>R:</TLabel><TInput $mt={6}>0 °<Chev /></TInput><TLabel $mt={6}>N:</TLabel><TInput $mt={6}>0 °<Chev /></TInput>
              </TGrid>
              <LinkIcon>
                <S w={8} h={20} vb="0 0 8 20"><path d="M1 8V2a1 1 0 011-1h4a1 1 0 011 1v6M1 12v6a1 1 0 001 1h4a1 1 0 001-1v-6M0 10h8" stroke="#888" /></S>
              </LinkIcon>
            </TransformTop>
            <TBottom>
              <TBottomBtn>
                <S w={18} h={18} vb="0 0 18 18"><path d="M7 2h9v13h-3" stroke="#5e5e5e" strokeDasharray="3 1.5" /><rect x="2" y="8" width="10" height="8" rx="2" fill="#5e5e5e" /></S>
              </TBottomBtn>
              <TBottomChev><Chev /></TBottomChev>
            </TBottom>
          </TransformBody>
        </RightPanel>
      </Workspace>

      <StatusBar>
        'NE' ausgewählt. <b>Ziehen</b> = Auswahl verschieben. <b>Klick</b> auf anderes Objekt = Objekt auswählen. <b>Klick</b> auf leeren Bereich = Auswahl aufheben. <b>Eingabetaste</b> = Werte für das Verschieben/Duplizieren eingeben.
      </StatusBar>
    </App_>
  );
}
